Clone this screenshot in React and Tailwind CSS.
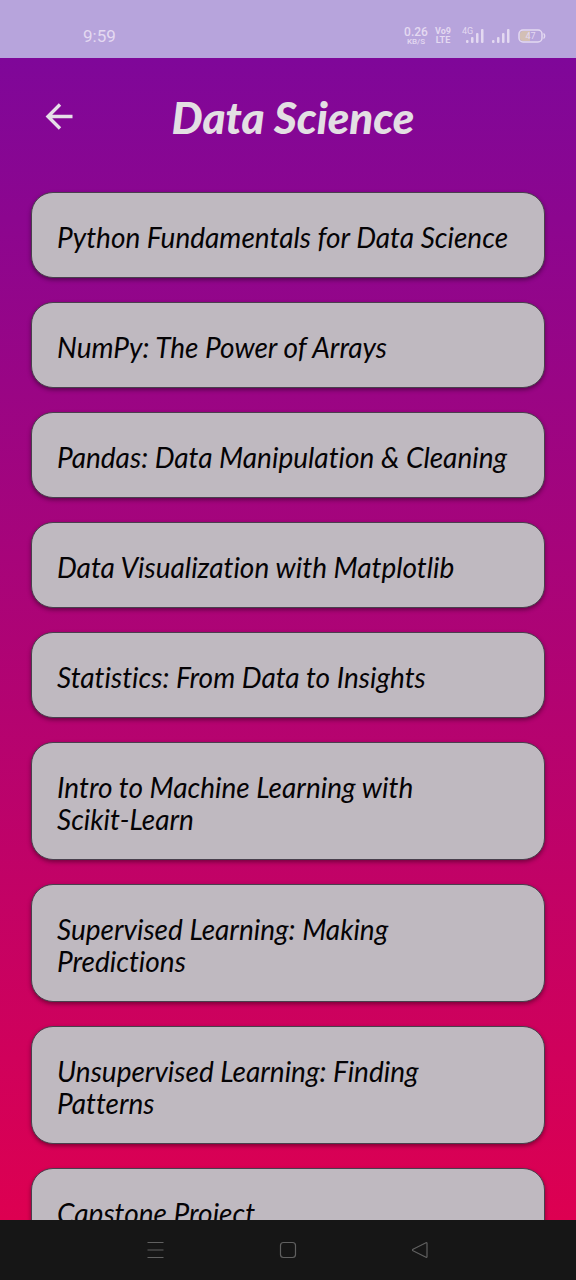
import React from "react";

const lessons = [
  "Python Fundamentals for Data Science",
  "NumPy: The Power of Arrays",
  "Pandas: Data Manipulation & Cleaning",
  "Data Visualization with Matplotlib",
  "Statistics: From Data to Insights",
  "Intro to Machine Learning with Scikit-Learn",
  "Supervised Learning: Making Predictions",
  "Unsupervised Learning: Finding Patterns",
  "Capstone Project",
];

function Signal() {
  return (
    <svg viewBox="0 0 18 14" className="h-[14px] w-[18px]" fill="currentColor" aria-hidden="true">
      <rect x="0" y="11" width="2.500" height="3" rx="1" />
      <rect x="5" y="8" width="2.500" height="6" rx="1" />
      <rect x="10" y="4" width="2.500" height="10" rx="1" />
      <rect x="15" y="0" width="2.500" height="14" rx="1" />
    </svg>
  );
}

function StatusBar() {
  return (
    <header className="flex h-[58px] shrink-0 items-center justify-between bg-[#b7a4dc] pt-[14px] pr-[30px] pl-[83px] font-['Roboto',sans-serif] text-[#e4d9f1]">
      <span className="text-[17px] leading-5">9:59</span>
      <div className="flex items-center">
        <div className="flex w-6 flex-col items-center font-medium">
          <span className="text-[12px] leading-[12px]">0.26</span>
          <span className="text-[8px] leading-[8px]">KB/S</span>
        </div>
        <div className="ml-[6px] flex w-[18px] flex-col items-center text-[9px] leading-[9px] font-bold">
          <span>Vo9</span>
          <span>LTE</span>
        </div>
        <div className="relative ml-[14px]">
          <span className="absolute -top-1 -left-1 text-[9px] leading-[12px]">4G</span>
          <Signal />
        </div>
        <div className="ml-[8px]">
          <Signal />
        </div>
        <svg viewBox="0 0 28 14" className="ml-[8px] h-[14px] w-7" aria-label="Battery 47 percent" role="img">
          <rect x="1" y="1" width="23" height="12" rx="4" fill="none" stroke="currentColor" strokeWidth="1.5" />
          <path d="M5 2h7v10H5a3 3 0 0 1-3-3V5a3 3 0 0 1 3-3Z" fill="#d3bfb5" />
          <path d="M25.5 4.5c1.5 1 1.5 4 0 5" fill="none" stroke="currentColor" strokeWidth="1.5" />
          <text x="12.5" y="10" fontSize="9" textAnchor="middle" fill="currentColor">47</text>
        </svg>
      </div>
    </header>
  );
}

function NavBar() {
  return (
    <nav className="flex h-[60px] shrink-0 items-center justify-center gap-[108px] bg-[#161616] text-[#606060]">
      <button type="button" aria-label="Recent apps">
        <svg viewBox="0 0 24 24" className="size-6" fill="none" stroke="currentColor" strokeWidth="1.2">
          <path d="M3.500 4.500h16M3.500 12h16M3.500 19.500h16" />
        </svg>
      </button>
      <button type="button" aria-label="Home">
        <svg viewBox="0 0 24 24" className="size-6" fill="none" stroke="currentColor" strokeWidth="1.2">
          <rect x="4.5" y="4.5" width="15" height="15" rx="3" />
        </svg>
      </button>
      <button type="button" aria-label="Back">
        <svg viewBox="0 0 24 24" className="size-6" fill="none" stroke="currentColor" strokeWidth="1.2" strokeLinejoin="round">
          <path d="M18 4.7 5 11.2Q4 12 5 12.8L18 19.3Q19 19.6 19 18.5V5.5Q19 4.4 18 4.7Z" />
        </svg>
      </button>
    </nav>
  );
}

function LessonTitle({ title }) {
  return title.split(" ").map((word, i) => (
    <React.Fragment key={i}>
      {i > 0 && " "}
      {word.includes("-") ? <span className="whitespace-nowrap">{word}</span> : word}
    </React.Fragment>
  ));
}

export default function App() {
  return (
    <div className="flex h-screen flex-col overflow-hidden">
      <StatusBar />
      <main className="flex min-h-0 grow flex-col overflow-hidden bg-linear-to-b/srgb from-[#7f0799] to-[#dd0051]">
        <div className="grid h-[134px] shrink-0 grid-cols-[40px_1fr_40px] items-center px-[38px] pb-4">
          <button type="button" aria-label="Go back" className="text-[#e6dfe8]">
            <svg viewBox="0 0 40 40" className="size-10" fill="none" stroke="currentColor" strokeWidth="3.4">
              <path d="M34.500 19.500H10M22 7.500 10 19.500 22 31.500" />
            </svg>
          </button>
          <h1 className="pl-[10px] text-center font-['Lato',sans-serif] text-[44px] leading-[56px] font-black whitespace-nowrap text-[#e3dfe3] italic">
            Data Science
          </h1>
        </div>
        <ul className="flex flex-col gap-6 px-[31px]">
          {lessons.map((lesson) => (
            <li key={lesson}>
              <button
                type="button"
                className="block w-full rounded-[22px] border border-[#49404d] bg-[#bfb9c0] pt-7 pr-7 pb-6 pl-[25px] text-left font-['Lato',sans-serif] text-[28px] leading-8 text-[#050305] italic shadow-[0_2px_4px_rgba(0,0,0,0.4)] [font-variant-ligatures:none]"
              >
                <LessonTitle title={lesson} />
              </button>
            </li>
          ))}
        </ul>
      </main>
      <NavBar />
    </div>
  );
}
